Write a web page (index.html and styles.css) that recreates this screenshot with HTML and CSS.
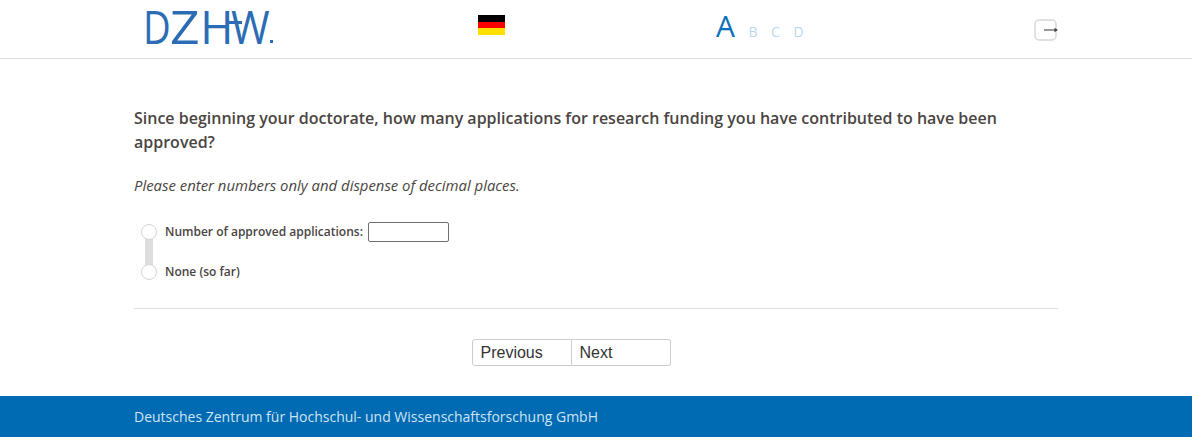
FILE: index.html
```html
<!DOCTYPE html>
<html lang="en">
<head>
<meta charset="utf-8">
<title>DZHW</title>
<link rel="stylesheet" href="styles.css">
</head>
<body>
<header class="header">
  <div class="header-inner">
    <div class="logo"><span class="logo-text"><span class="l-d">D</span><span class="l-z">Z</span><span class="l-h">H</span><span class="l-w">W</span></span><span class="logo-dot"></span><span class="logo-bar"></span></div>
    <div class="flag"><span class="flag-black"></span><span class="flag-red"></span><span class="flag-gold"></span></div>
    <div class="sizes"><span class="size-a">A</span><span class="size-o">B</span><span class="size-o">C</span><span class="size-o">D</span></div>
    <div class="exit">
      <svg width="25" height="22" viewBox="0 0 25 22"><rect x="1" y="1" width="21" height="20" rx="4" fill="#fff" stroke="#d6d6d6" stroke-width="1.4"/><path d="M10 11h12" stroke="#555" stroke-width="1.2" fill="none"/><path d="M20.500 8.800l3.500 2.200-3.500 2.200z" fill="#444"/></svg>
    </div>
  </div>
</header>
<main class="main">
  <h1 class="question">Since beginning your doctorate, how many applications for research funding you have contributed to have been approved?</h1>
  <p class="hint">Please enter numbers only and dispense of decimal places.</p>
  <div class="options">
    <div class="track"><span class="radio"></span><span class="connector"></span><span class="radio"></span></div>
    <div class="labels">
      <div class="label-row"><label class="label">Number of approved applications:</label><input class="num" type="text"></div>
      <div class="label-row"><label class="label">None (so far)</label></div>
    </div>
  </div>
  <hr class="rule">
  <div class="nav"><button class="btn btn-first">Previous</button><button class="btn btn-last">Next</button></div>
</main>
<footer class="footer"><div class="footer-inner">Deutsches Zentrum für Hochschul- und Wissenschaftsforschung GmbH</div></footer>
</body>
</html>
```
FILE: styles.css
```css
* { box-sizing: border-box; }
html, body { margin: 0; padding: 0; background: #fff; }
body { font-family: "Open Sans", sans-serif; color: #4a4542; height: 446px; overflow: hidden; }
.header { height: 59px; border-bottom: 1px solid #dedede; }
.header-inner { width: 924px; margin: 0 auto; height: 58px; display: flex; position: relative; }
.logo { position: relative; flex: 0 0 344px; height: 58px; color: #2b6cb5; white-space: nowrap; }
.logo-text { position: absolute; left: 9px; top: 0; display: flex; font-family: "Open Sans", sans-serif; font-weight: 500; font-size: 45px; line-height: 54px; }
.logo-text span { display: block; transform-origin: left center; }
.l-d { margin-right: -5.300px; transform: scaleX(0.85); }
.l-z { margin-right: 4px; transform: scaleX(1.15); }
.l-h { margin-right: -2.300px; }
.l-w { transform: scaleX(0.93); }
.logo-dot { position: absolute; left: 136px; top: 40px; width: 3px; height: 3px; background: #2b6cb5; }
.logo-bar { position: absolute; left: 95px; top: 21px; width: 13px; height: 3px; background: #2b6cb5; }
.flag { flex: 0 0 27px; height: 20px; margin-top: 15px; display: flex; flex-direction: column; }
.flag span { flex: 1; }
.flag-black { background: #000; }
.flag-red { background: #f00; }
.flag-gold { background: #ffdf00; }
.sizes { margin-left: 211px; flex: 0 0 319px; display: flex; align-items: baseline; height: 44px; color: #b9d8ee; font-size: 14px; }
.size-a { font-size: 30px; font-weight: 500; color: #0a70bd; line-height: 52px; margin-right: 13.500px; }
.size-o { margin-right: 12.500px; width: 10px; }
.exit { margin-top: 19px; margin-left: -1px; }
.exit svg { display: block; }
.main { width: 924px; margin: 0 auto; padding-top: 47px; }
.question { margin: 0; font-size: 16px; font-weight: 600; line-height: 24px; color: #4a4542; }
.hint { margin: 21px 0 0; font-size: 14.900px; font-style: italic; line-height: 20px; }
.options { display: flex; margin-top: 26px; margin-left: 7px; }
.track { width: 24px; display: flex; flex-direction: column; align-items: flex-start; padding-top: 3px; }
.radio { width: 16px; height: 16px; border: 1px solid #d4d4d4; border-radius: 50%; background: #fff; position: relative; z-index: 1; }
.connector { width: 8px; height: 26px; margin: -1px 0 -1px 4px; background: #dedede; }
.labels { display: flex; flex-direction: column; }
.label-row { height: 40px; display: flex; align-items: flex-start; }
.label { font-size: 12px; font-weight: 600; line-height: 20px; padding-top: 1px; }
.num { width: 81px; height: 20px; margin-top: 1px; margin-left: 5px; border: 1px solid #6e6e6e; border-radius: 2px; background: #fff; padding: 0; }
.rule { border: 0; border-top: 1px solid #dedede; margin: 7px 0 0; }
.nav { display: flex; justify-content: center; margin-top: 30px; padding-right: 50px; }
.btn { width: 99px; height: 27px; margin: 0; border: 1px solid #ccc; background: #fff; font-family: "Liberation Sans", sans-serif; font-size: 16px; color: #333; text-align: left; padding: 0 8px; }
.btn-first { border-radius: 3px 0 0 3px; width: 100px; }
.btn-last { border-radius: 0 3px 3px 0; border-left: 0; }
.footer { margin-top: 30px; height: 41px; background: #006ab3; }
.footer-inner { width: 924px; margin: 0 auto; font-size: 14px; line-height: 41px; color: #cfe4f3; }
```
